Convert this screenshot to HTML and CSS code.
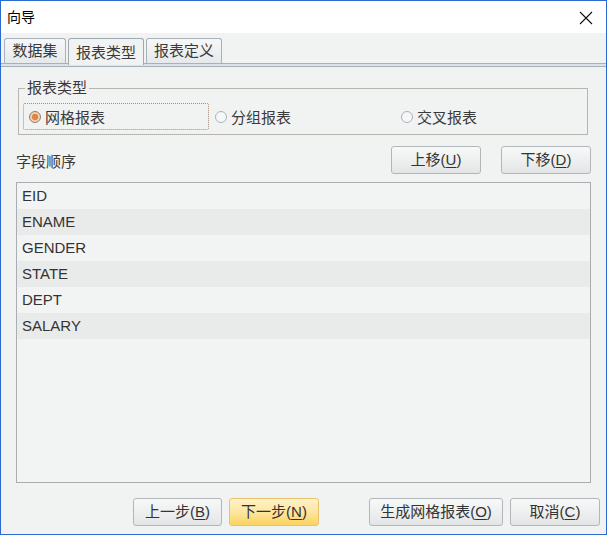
FILE: index.html
```html
<!DOCTYPE html>
<html lang="zh">
<head>
<meta charset="utf-8">
<title>向导</title>
<link rel="stylesheet" href="styles.css">
</head>
<body>
<div class="window">
  <div class="titlebar">
    <span class="title">向导</span>
    <svg class="close" width="14" height="14" viewBox="0 0 14 14"><path d="M1 1 L13 13 M13 1 L1 13" stroke="#111" stroke-width="1.1" fill="none"/></svg>
  </div>
  <div class="client">
    <div class="tabs">
      <div class="tab t62">数据集</div>
      <div class="tab t76 active">报表类型</div>
      <div class="tab t76">报表定义</div>
    </div>
    <div class="tabline"></div>
    <div class="panel">
      <fieldset class="group">
        <legend>报表类型</legend>
        <div class="radios">
          <div class="radio focus"><span class="dot checked"></span><span>网格报表</span></div>
          <div class="radio"><span class="dot"></span><span>分组报表</span></div>
          <div class="radio"><span class="dot"></span><span>交叉报表</span></div>
        </div>
      </fieldset>
      <div class="order-row">
        <span class="label">字段顺序</span>
        <div class="order-btns">
          <button class="btn w90">上移(<u>U</u>)</button>
          <button class="btn w90">下移(<u>D</u>)</button>
        </div>
      </div>
      <div class="list">
        <div class="row">EID</div>
        <div class="row alt">ENAME</div>
        <div class="row">GENDER</div>
        <div class="row alt">STATE</div>
        <div class="row">DEPT</div>
        <div class="row alt">SALARY</div>
      </div>
      <div class="footer">
        <button class="btn w89">上一步(<u>B</u>)</button>
        <button class="btn w90 primary">下一步(<u>N</u>)</button>
        <button class="btn w134 gen">生成网格报表(<u>O</u>)</button>
        <button class="btn w90">取消(<u>C</u>)</button>
      </div>
    </div>
  </div>
</div>
</body>
</html>
```

FILE: styles.css
```css
* { box-sizing: border-box; }
html, body { margin: 0; padding: 0; background: #ffffff; }
body {
  font-family: "Liberation Sans", "Noto Sans CJK SC", sans-serif;
  font-size: 15px;
  color: #333;
}
.window {
  width: 607px;
  height: 535px;
  border: 1px solid #2b6ad0;
  display: flex;
  flex-direction: column;
  background: #f1f3f3;
}
.titlebar {
  height: 32px;
  background: #ffffff;
  display: flex;
  align-items: center;
  justify-content: space-between;
  padding: 0 13px 0 6px;
}
.title { color: #000; font-size: 14px; line-height: 18px; }
.close { display: block; margin-top: 1px; }
.client { flex: 1; display: flex; flex-direction: column; }
.tabs {
  height: 30px;
  display: flex;
  align-items: flex-end;
  gap: 2px;
  padding-left: 3px;
}
.tab {
  height: 25px;
  padding: 0;
  text-align: center;
  border: 1px solid #a9b2ba;
  border-bottom: none;
  border-radius: 3px 3px 0 0;
  background: linear-gradient(#f6f7f8, #e6e9eb);
  line-height: 23px;
  color: #3a3a3a;
}
.t62 { width: 62px; }
.t76 { width: 76px; }
.tab.active {
  height: 27px;
  margin-bottom: -2px;
  background: #f1f3f3;
  border-color: #9ea8b1;
  line-height: 27px;
  position: relative;
}
.tabline {
  height: 4px;
  border-top: 1px solid #a8b1b9;
  border-bottom: 1px solid #a8b1b9;
  background: #dde2e6;
}
.panel { flex: 1; display: flex; flex-direction: column; }
.group {
  margin: 12px 18px 0 17px;
  padding: 6px 4px 4px 4px;
  border: 1px solid #b9b5ae;
  border-radius: 0;
  min-width: 0;
}
.group legend {
  padding: 0 2px;
  margin-left: 2px;
  line-height: 18px;
  color: #3a3a3a;
}
.radios {
  display: grid;
  grid-template-columns: 186px 186px 186px;
}
.radio {
  height: 27px;
  display: flex;
  align-items: center;
  gap: 4px;
  padding-left: 5px;
  border: 1px solid transparent;
  color: #3a3a3a;
}
.radio.focus {
  border: 1px dotted #a58b7a;
  border-radius: 2px;
}
.dot {
  width: 12px;
  height: 12px;
  border-radius: 50%;
  border: 1px solid #aab3ba;
  background: #f5f7f8;
  flex: none;
}
.dot.checked {
  border-color: #8f7d70;
  background: radial-gradient(circle, #e0843e 0 2.8px, #f1d2b6 3.6px 5px);
}
.order-row {
  margin: 11px 15px 0 15px;
  height: 28px;
  display: flex;
  align-items: center;
  justify-content: space-between;
}
.label { color: #3a3a3a; }
.order-btns { display: flex; gap: 20px; }
.btn {
  height: 28px;
  padding: 0;
  border: 1px solid #b1b6bb;
  border-radius: 3px;
  background: linear-gradient(#f7f8f8, #eef0f0 50%, #e3e5e6);
  font-family: "Liberation Sans", "Noto Sans CJK SC", sans-serif;
  font-size: 15px;
  color: #333;
  line-height: 26px;
  text-align: center;
}
.btn u { text-decoration: underline; text-underline-offset: 2px; }
.w89 { width: 89px; }
.w90 { width: 90px; }
.w134 { width: 134px; }
.btn.primary {
  border-color: #e7c46c;
  background: linear-gradient(#fff2c8, #fee6a0 50%, #fbd35e);
}
.list {
  margin: 8px 15px 0 15px;
  height: 301px;
  border: 1px solid #a9aeb3;
  background: #f2f4f4;
}
.row {
  height: 26px;
  line-height: 26px;
  padding-left: 5px;
  color: #333;
}
.row.alt { background: #e9ebeb; }
.footer {
  margin: 15px 6px 0 0;
  display: flex;
  justify-content: flex-end;
  gap: 7px;
}
.btn.gen { margin-left: 43px; }
```
